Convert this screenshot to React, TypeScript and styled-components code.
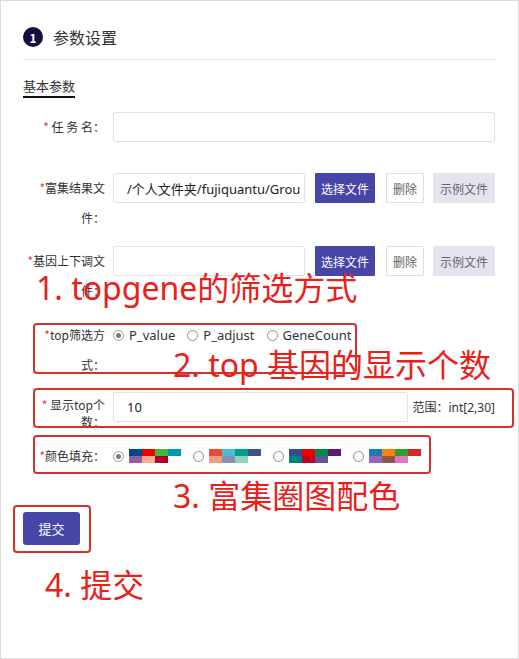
import React from "react";
import styled, { createGlobalStyle } from "styled-components";

const GlobalStyle = createGlobalStyle`
  html, body { margin: 0; padding: 0; background: #fff; }
  body { font-family: "Microsoft YaHei", "Noto Sans CJK SC", sans-serif; color: #333; }
  * { box-sizing: border-box; }
`;

const latin = `"Noto Sans", "Noto Sans CJK SC", sans-serif`;

const Frame = styled.div`
  position: relative;
  width: 519px;
  height: 659px;
  border: 1px solid #dcdcdc;
  padding: 26px 23px 0 22px;
  overflow: hidden;
`;

const Header = styled.div`
  display: flex;
  align-items: center;
  height: 20px;
`;

const StepBadge = styled.span`
  width: 20px;
  height: 20px;
  border-radius: 50%;
  background: #170d3f;
  color: #fff;
  font-size: 12px;
  font-weight: bold;
  display: flex;
  align-items: center;
  justify-content: center;
  margin-right: 10px;
`;

const HeaderTitle = styled.span`
  font-size: 16px;
  color: #333;
`;

const Divider = styled.div`
  height: 1px;
  background: #e6e6e6;
  margin-top: 12px;
`;

const Tab = styled.div`
  display: inline-block;
  margin-top: 16px;
  font-size: 13px;
  line-height: 20px;
  color: #333;
  border-bottom: 2px solid #111;
`;

const Form = styled.div`
  margin-top: 14px;
  padding-left: 2px;
`;

const Row = styled.div<{ $mb: number }>`
  display: flex;
  align-items: flex-start;
  margin-bottom: ${(p) => p.$mb}px;
`;

const Label = styled.div<{ $lh?: number; $pt?: number }>`
  width: 80px;
  flex-shrink: 0;
  text-align: right;
  font-size: 12px;
  line-height: ${(p) => p.$lh ?? 30}px;
  padding-top: ${(p) => p.$pt ?? 0}px;
  color: #333;
  margin-right: 8px;
`;

const Star = styled.span`
  color: #e5383b;
`;

const Control = styled.div`
  flex: 1;
  display: flex;
  align-items: center;
  min-height: 30px;
`;

const TextInput = styled.input<{ $w?: number }>`
  height: 30px;
  ${(p) => (p.$w ? `width: ${p.$w}px; flex: none;` : "flex: 1; min-width: 0;")}
  border: 1px solid #e2e2e2;
  border-radius: 2px;
  padding: 0 4px 0 13px;
  font-family: ${latin};
  font-size: 13px;
  color: #222;
  outline: none;
  background: #fff;
`;

const Btn = styled.button<{ $kind: "primary" | "plain" | "muted"; $w: number; $ml: number }>`
  height: 30px;
  width: ${(p) => p.$w}px;
  margin-left: ${(p) => p.$ml}px;
  flex: none;
  padding: 0;
  font-family: "Microsoft YaHei", "Noto Sans CJK SC", sans-serif;
  font-size: 12px;
  border-radius: 1px;
  cursor: pointer;
  ${(p) =>
    p.$kind === "primary"
      ? "background:#4646a7;color:#fff;border:none;"
      : p.$kind === "plain"
      ? "background:#fff;color:#666;border:1px solid #dedede;"
      : "background:#e4e4ee;color:#666;border:none;"}
`;

const Hint = styled.span`
  font-family: ${latin};
  font-size: 12px;
  color: #333;
  margin-left: 4px;
  white-space: nowrap;
`;

const RadioItem = styled.label`
  display: flex;
  align-items: center;
  margin-right: 12px;
  font-family: ${latin};
  font-size: 13px;
  color: #333;
`;

const RadioDot = styled.span<{ $on?: boolean }>`
  width: 11px;
  height: 11px;
  border-radius: 50%;
  border: 1px solid ${(p) => (p.$on ? "#9a9a9a" : "#8c8c8c")};
  background: #fff;
  display: flex;
  align-items: center;
  justify-content: center;
  margin-right: 5px;
  flex: none;
  &::after {
    content: "";
    width: 5px;
    height: 5px;
    border-radius: 50%;
    background: ${(p) => (p.$on ? "#7a7a7a" : "transparent")};
  }
`;

const Palette = styled.span`
  display: grid;
  grid-template-columns: repeat(4, 13px);
  grid-template-rows: 7px 7px;
`;

const Cell = styled.span<{ $c: string }>`
  background: ${(p) => p.$c};
`;

const Submit = styled.button`
  margin-top: 41px;
  margin-left: -2px;
  width: 57px;
  height: 33px;
  border: none;
  border-radius: 3px;
  background: #4646a7;
  color: #fff;
  font-family: "Microsoft YaHei", "Noto Sans CJK SC", sans-serif;
  font-size: 13px;
  cursor: pointer;
`;

const NoteBox = styled.div`
  position: absolute;
  border: 2px solid #d6302a;
  border-radius: 4px;
  pointer-events: none;
`;

const NoteText = styled.div`
  position: absolute;
  font-family: ${latin};
  font-size: 32px;
  line-height: 20px;
  color: #e8201a;
  white-space: nowrap;
  pointer-events: none;
`;

const palettes: string[][] = [
  ["#00468b", "#ed0000", "#42b540", "#0099b4", "#925e9f", "#fdaf91", "#ad002a", "transparent"],
  ["#e64b35", "#4dbbd5", "#00a087", "#3c5488", "#f39b7f", "#8491b4", "#91d1c2", "transparent"],
  ["#3b4992", "#ee0000", "#008b45", "#631879", "#008280", "#bb0021", "#5f559b", "transparent"],
  ["#1f77b4", "#ff7f0e", "#2ca02c", "#d62728", "#9467bd", "#8c564b", "#e377c2", "transparent"],
];

const boxes = [
  { l: 32, t: 322, w: 324, h: 51 },
  { l: 32, t: 387, w: 481, h: 40 },
  { l: 32, t: 434, w: 398, h: 39 },
  { l: 12, t: 504, w: 78, h: 48 },
];

const notes = [
  { l: 35, t: 277, text: "1. topgene的筛选方式" },
  { l: 172, t: 354, text: "2. top 基因的显示个数" },
  { l: 172, t: 485, text: "3. 富集圈图配色" },
  { l: 44, t: 574, text: "4. 提交" },
];

export default function App() {
  return (
    <>
      <GlobalStyle />
      <Frame>
        <Header>
          <StepBadge>1</StepBadge>
          <HeaderTitle>参数设置</HeaderTitle>
        </Header>
        <Divider />
        <Tab>基本参数</Tab>
        <Form>
          <Row $mb={31}>
            <Label>
              <Star>*</Star> 任 务 名：
            </Label>
            <Control>
              <TextInput defaultValue="" />
            </Control>
          </Row>
          <Row $mb={13}>
            <Label>
              <Star>*</Star>富集结果文件：
            </Label>
            <Control>
              <TextInput $w={192} defaultValue="/个人文件夹/fujiquantu/Group_enrich.txt" readOnly />
              <Btn $kind="primary" $w={60} $ml={10}>选择文件</Btn>
              <Btn $kind="plain" $w={38} $ml={11}>删除</Btn>
              <Btn $kind="muted" $w={62} $ml={9}>示例文件</Btn>
            </Control>
          </Row>
          <Row $mb={14}>
            <Label>
              <Star>*</Star>基因上下调文件：
            </Label>
            <Control>
              <TextInput $w={192} defaultValue="" />
              <Btn $kind="primary" $w={60} $ml={10}>选择文件</Btn>
              <Btn $kind="plain" $w={38} $ml={11}>删除</Btn>
              <Btn $kind="muted" $w={62} $ml={9}>示例文件</Btn>
            </Control>
          </Row>
          <Row $mb={12}>
            <Label>
              <Star>*</Star>top筛选方式：
            </Label>
            <Control>
              <RadioItem>
                <RadioDot $on />
                P_value
              </RadioItem>
              <RadioItem>
                <RadioDot />
                P_adjust
              </RadioItem>
              <RadioItem>
                <RadioDot />
                GeneCount
              </RadioItem>
            </Control>
          </Row>
          <Row $mb={11}>
            <Label $lh={17} $pt={4}>
              <Star>*</Star> 显示top个数：
            </Label>
            <Control>
              <TextInput defaultValue="10" />
              <Hint>范围：int[2,30]</Hint>
            </Control>
          </Row>
          <Row $mb={0}>
            <Label>
              <Star>*</Star>颜色填充：
            </Label>
            <Control>
              {palettes.map((p, i) => (
                <RadioItem key={i}>
                  <RadioDot $on={i === 0} />
                  <Palette>
                    {p.map((c, j) => (
                      <Cell key={j} $c={c} />
                    ))}
                  </Palette>
                </RadioItem>
              ))}
            </Control>
          </Row>
          <Submit>提交</Submit>
        </Form>
        {boxes.map((b, i) => (
          <NoteBox key={i} style={{ left: b.l, top: b.t, width: b.w, height: b.h }} />
        ))}
        {notes.map((n, i) => (
          <NoteText key={i} style={{ left: n.l, top: n.t }}>
            {n.text}
          </NoteText>
        ))}
      </Frame>
    </>
  );
}
